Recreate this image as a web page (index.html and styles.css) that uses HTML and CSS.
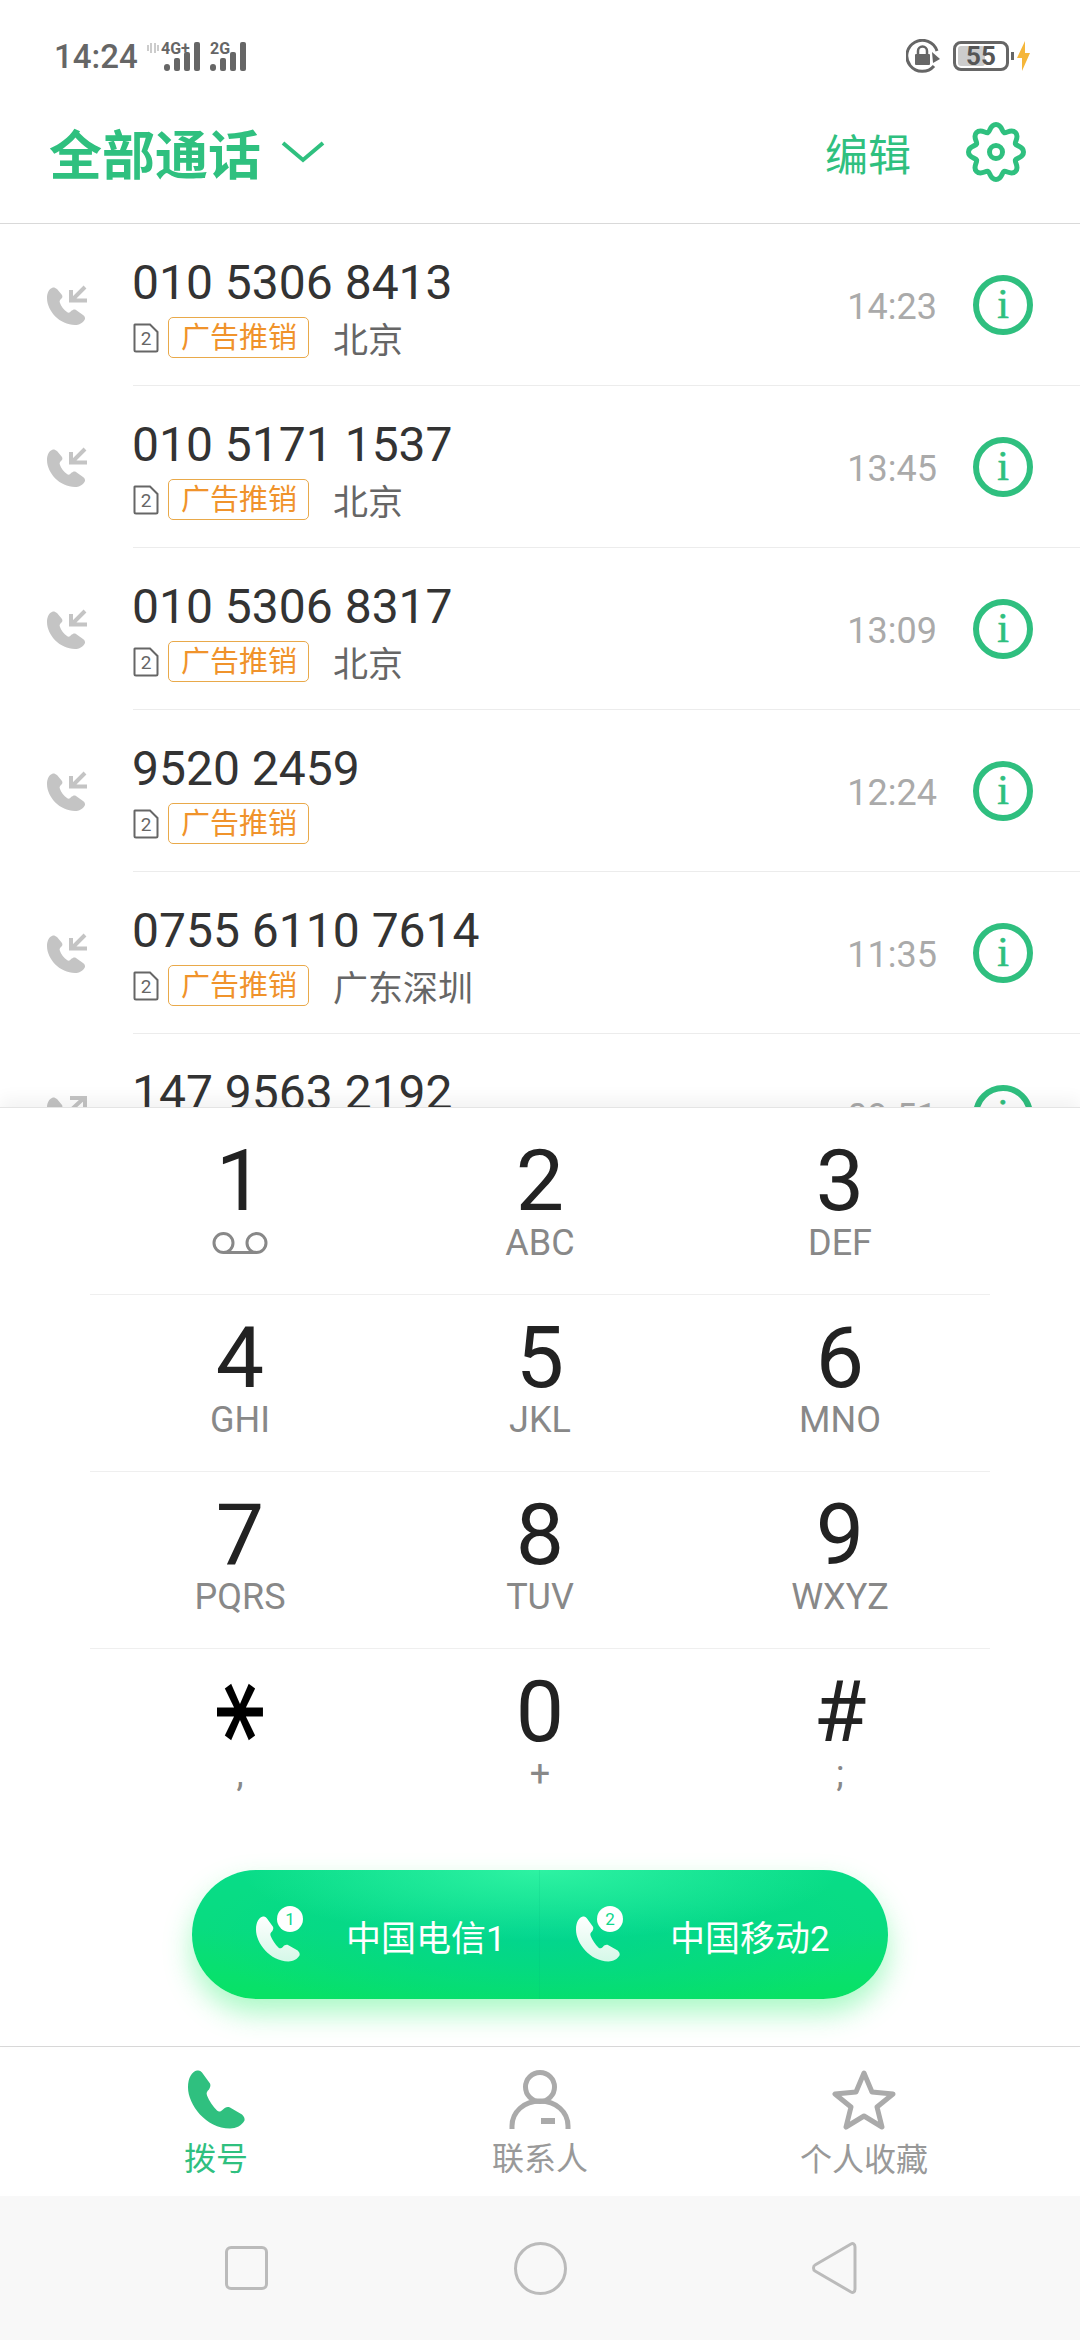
FILE: index.html
```html
<!DOCTYPE html>
<html lang="zh-CN">
  <head>
    <meta charset="UTF-8" />
    <meta name="viewport" content="width=device-width, initial-scale=1.0" />
    <title>拨号</title>
    <link rel="stylesheet" href="styles.css">
  </head>
  <body>
    <svg class="icon-defs" width="0" height="0">
      <defs>
        <linearGradient id="handset-fade" x1="0" y1="0" x2="0" y2="1">
          <stop offset="0" stop-color="#fff" />
          <stop offset="1" stop-color="#d5f8e8" />
        </linearGradient>
        <symbol id="handset" viewBox="0 0 57 58">
          <path d="M9 0C4 1 0 7 0 17C0 34 18 58 42 58C48 58 54 55 56.500 50C57 48 56 46 54 44L42 37C39 36 37 37 35 39C33 41 31 42 29 40C25 36 21 30 19 25C18 22 19 21 21 19C22 17 23 15 22 13L14 2C12 0 11 0 9 0Z" />
        </symbol>
        <symbol id="call-in" viewBox="0 0 40 40">
          <path d="M5 3C2 4 0 8 0 13C0 26 13 40 28 40C32 40 36 38 38 34C38 33 38 31 36 30L29 25C27 24 26 25 24 26C23 28 21 28 20 27C17 25 14 21 13 18C12 16 13 15 14 14C15 13 16 12 15 10L10 4C8 3 7 2 5 3Z" />
          <path class="call-arrow" d="M38 2L25 15M24 5V15.500H40" />
        </symbol>
        <symbol id="call-out" viewBox="0 0 40 40">
          <path d="M5 3C2 4 0 8 0 13C0 26 13 40 28 40C32 40 36 38 38 34C38 33 38 31 36 30L29 25C27 24 26 25 24 26C23 28 21 28 20 27C17 25 14 21 13 18C12 16 13 15 14 14C15 13 16 12 15 10L10 4C8 3 7 2 5 3Z" />
          <path class="call-arrow" d="M24 15L37 3M23 3H38V14" />
        </symbol>
        <symbol id="sim-2" viewBox="0 0 26 30">
          <path class="sim-outline" d="M2 1.500H17L24.500 9V27A1.500 1.500 0 0 1 23 28.500H3A1.500 1.500 0 0 1 1.500 27V2Z" />
          <text class="sim-number" x="13" y="22" text-anchor="middle">2</text>
        </symbol>
      </defs>
    </svg>

    <div class="status-bar">
      <span class="status-time">14:24</span>
      <svg class="status-signal" width="120" height="34" viewBox="0 0 120 34">
        <path class="status-hd" d="M2 6V12M5 4V14M9 4V14M12 6V12" />
        <text class="status-net" x="15" y="15">4G+</text>
        <rect x="18" y="25" width="6" height="7" rx="3" />
        <rect x="28" y="19" width="6" height="13" rx="2" />
        <rect x="38" y="13" width="6" height="19" rx="2" />
        <rect x="48" y="3" width="6" height="29" rx="2" />
        <text class="status-net" x="64" y="15">2G</text>
        <rect x="64" y="25" width="6" height="7" rx="3" />
        <rect x="74" y="19" width="6" height="13" rx="2" />
        <rect x="84" y="13" width="6" height="19" rx="2" />
        <rect x="94" y="3" width="6" height="29" rx="2" />
      </svg>
      <span class="status-spacer"></span>
      <svg class="status-rotate" width="34" height="34" viewBox="0 0 34 34">
        <path class="rotate-ring" d="M28 27A15.500 15.500 0 1 1 31 12" />
        <path class="rotate-tip" d="M26 13L34 20L27 24Z" />
        <rect class="rotate-lock" x="9" y="15" width="15" height="11" rx="1" />
        <path class="rotate-shackle" d="M12 15V12A4.500 4.500 0 0 1 21 12V15" />
      </svg>
      <div class="battery">
        <div class="battery-level"></div>
        <span class="battery-text">55</span>
      </div>
      <span class="battery-nub"></span>
      <svg class="battery-bolt" width="13" height="30" viewBox="0 0 13 30">
        <path d="M8 0L0 17H5L5 30L13 12H8Z" />
      </svg>
    </div>

    <header class="top-bar">
      <h1 class="top-title">全部通话</h1>
      <svg class="top-chevron" width="44" height="22" viewBox="0 0 44 22">
        <path d="M2 2L22 19L42 2" />
      </svg>
      <span class="top-spacer"></span>
      <span class="top-edit">编辑</span>
      <svg class="top-gear" width="60" height="60" viewBox="0 0 60 60">
        <path d="M57.500 30C57.500 36 50.360 35.730 49.400 38.040C48.440 40.350 53.690 45.210 49.450 49.450C45.210 53.690 40.350 48.440 38.040 49.400C35.730 50.360 36 57.500 30 57.500C24 57.500 24.270 50.360 21.960 49.400C19.650 48.440 14.790 53.690 10.550 49.450C6.310 45.210 11.560 40.350 10.600 38.040C9.640 35.730 2.500 36 2.500 30C2.500 24 9.640 24.270 10.600 21.960C11.560 19.650 6.310 14.790 10.550 10.550C14.790 6.310 19.650 11.560 21.960 10.600C24.270 9.640 24 2.500 30 2.500C36 2.500 35.730 9.640 38.040 10.600C40.350 11.560 45.210 6.310 49.450 10.550C53.690 14.790 48.440 19.650 49.400 21.960C50.360 24.270 57.500 24 57.500 30Z" />
        <circle cx="30" cy="30" r="6.500" />
      </svg>
    </header>

    <main class="call-list">
      <div class="call-row">
        <svg class="call-icon"><use href="#call-in" /></svg>
        <div class="call-main">
          <div class="call-info">
            <div class="call-number">010 5306 8413</div>
            <div class="call-meta">
              <svg class="call-sim"><use href="#sim-2" /></svg>
              <span class="call-tag">广告推销</span>
              <span class="call-place">北京</span>
            </div>
          </div>
          <span class="call-time">14:23</span>
          <span class="call-detail">i</span>
        </div>
      </div>
      <div class="call-row">
        <svg class="call-icon"><use href="#call-in" /></svg>
        <div class="call-main">
          <div class="call-info">
            <div class="call-number">010 5171 1537</div>
            <div class="call-meta">
              <svg class="call-sim"><use href="#sim-2" /></svg>
              <span class="call-tag">广告推销</span>
              <span class="call-place">北京</span>
            </div>
          </div>
          <span class="call-time">13:45</span>
          <span class="call-detail">i</span>
        </div>
      </div>
      <div class="call-row">
        <svg class="call-icon"><use href="#call-in" /></svg>
        <div class="call-main">
          <div class="call-info">
            <div class="call-number">010 5306 8317</div>
            <div class="call-meta">
              <svg class="call-sim"><use href="#sim-2" /></svg>
              <span class="call-tag">广告推销</span>
              <span class="call-place">北京</span>
            </div>
          </div>
          <span class="call-time">13:09</span>
          <span class="call-detail">i</span>
        </div>
      </div>
      <div class="call-row">
        <svg class="call-icon"><use href="#call-in" /></svg>
        <div class="call-main">
          <div class="call-info">
            <div class="call-number">9520 2459</div>
            <div class="call-meta">
              <svg class="call-sim"><use href="#sim-2" /></svg>
              <span class="call-tag">广告推销</span>
            </div>
          </div>
          <span class="call-time">12:24</span>
          <span class="call-detail">i</span>
        </div>
      </div>
      <div class="call-row">
        <svg class="call-icon"><use href="#call-in" /></svg>
        <div class="call-main">
          <div class="call-info">
            <div class="call-number">0755 6110 7614</div>
            <div class="call-meta">
              <svg class="call-sim"><use href="#sim-2" /></svg>
              <span class="call-tag">广告推销</span>
              <span class="call-place">广东深圳</span>
            </div>
          </div>
          <span class="call-time">11:35</span>
          <span class="call-detail">i</span>
        </div>
      </div>
      <div class="call-row">
        <svg class="call-icon"><use href="#call-out" /></svg>
        <div class="call-main">
          <div class="call-info">
            <div class="call-number">147 9563 2192</div>
          </div>
          <span class="call-time">09:51</span>
          <span class="call-detail">i</span>
        </div>
      </div>
    </main>

    <section class="dialer">
      <div class="keypad">
        <div class="key">
          <span class="key-digit">1</span>
          <svg class="key-voicemail" width="56" height="24" viewBox="0 0 56 24">
            <circle cx="11.500" cy="12" r="9.500" />
            <circle cx="44.500" cy="12" r="9.500" />
            <path d="M11.500 21.500H44.500" />
          </svg>
        </div>
        <div class="key"><span class="key-digit">2</span><span class="key-letters">ABC</span></div>
        <div class="key"><span class="key-digit">3</span><span class="key-letters">DEF</span></div>
        <div class="key"><span class="key-digit">4</span><span class="key-letters">GHI</span></div>
        <div class="key"><span class="key-digit">5</span><span class="key-letters">JKL</span></div>
        <div class="key"><span class="key-digit">6</span><span class="key-letters">MNO</span></div>
        <div class="key"><span class="key-digit">7</span><span class="key-letters">PQRS</span></div>
        <div class="key"><span class="key-digit">8</span><span class="key-letters">TUV</span></div>
        <div class="key"><span class="key-digit">9</span><span class="key-letters">WXYZ</span></div>
        <div class="key"><span class="key-digit key-star">*</span><span class="key-letters">,</span></div>
        <div class="key"><span class="key-digit">0</span><span class="key-letters">+</span></div>
        <div class="key"><span class="key-digit">#</span><span class="key-letters">;</span></div>
      </div>

      <div class="dial-pill">
        <div class="dial-sim dial-sim-first">
          <div class="dial-icon">
            <svg class="dial-handset" width="44" height="46"><use href="#handset" /></svg>
            <span class="dial-badge">1</span>
          </div>
          <span class="dial-name">中国电信1</span>
        </div>
        <div class="dial-sim dial-sim-second">
          <div class="dial-icon">
            <svg class="dial-handset" width="44" height="46"><use href="#handset" /></svg>
            <span class="dial-badge">2</span>
          </div>
          <span class="dial-name">中国移动2</span>
        </div>
      </div>
    </section>

    <nav class="tab-bar">
      <div class="tab tab-active">
        <svg class="tab-icon" width="57" height="59"><use href="#handset" /></svg>
        <span class="tab-label">拨号</span>
      </div>
      <div class="tab">
        <svg class="tab-icon tab-line" width="62" height="59" viewBox="0 0 62 59">
          <circle cx="31" cy="17" r="14.500" />
          <path d="M3 59V56C3 42 15 31 31 31C47 31 59 42 59 56V59" />
          <path class="tab-dash" d="M32 51H46" />
        </svg>
        <span class="tab-label">联系人</span>
      </div>
      <div class="tab">
        <svg class="tab-icon tab-line" width="64" height="60" viewBox="0 0 64 60">
          <path d="M32 3L40 22L61 24L45 37L50 57L32 46L14 57L19 37L3 24L24 22Z" />
        </svg>
        <span class="tab-label">个人收藏</span>
      </div>
    </nav>

    <div class="system-bar">
      <span class="system-square"></span>
      <span class="system-circle"></span>
      <svg class="system-back" width="46" height="54" viewBox="0 0 46 54">
        <path d="M40 3C42 2 44 3 44 6V48C44 51 42 52 40 51L4 30C2 29 2 25 4 24Z" />
      </svg>
    </div>
  </body>
</html>
```

FILE: styles.css
```css
* {
  box-sizing: border-box;
}

body {
  margin: 0;
  width: 1080px;
  height: 2340px;
  display: flex;
  flex-direction: column;
  overflow: hidden;
  background-color: #fff;
  font-family: Roboto, "Noto Sans CJK SC", sans-serif;
}

.icon-defs {
  position: absolute;
}

/* status bar */
.status-bar {
  height: 80px;
  padding: 32px 50px 0 54px;
  display: flex;
  align-items: center;
  flex-shrink: 0;
}

.status-time {
  font-size: 33px;
  font-weight: 500;
  color: #666;
}

.status-signal {
  margin-left: 8px;
  fill: #666;
}

.status-hd {
  fill: none;
  stroke: #ccc;
  stroke-width: 2;
}

.status-net {
  font-size: 16px;
  font-weight: 700;
}

.status-spacer,
.top-spacer {
  flex: 1;
}

.status-rotate {
  margin-right: 13px;
}

.rotate-ring {
  fill: none;
  stroke: #666;
  stroke-width: 3;
}

.rotate-tip,
.rotate-lock {
  fill: #666;
}

.rotate-shackle {
  fill: none;
  stroke: #666;
  stroke-width: 2.5;
}

.battery {
  width: 56px;
  height: 30px;
  border: 3px solid #666;
  border-radius: 8px;
  padding: 2px;
  position: relative;
}

.battery-level {
  width: 27px;
  height: 100%;
  background-color: #ccc;
  border-radius: 3px;
}

.battery-text {
  position: absolute;
  left: 0;
  right: 0;
  top: -3px;
  text-align: center;
  font-size: 26px;
  line-height: 30px;
  font-weight: 700;
  color: #555;
}

.battery-nub {
  width: 3px;
  height: 8px;
  margin-left: 2px;
  background-color: #666;
}

.battery-bolt {
  margin-left: 3px;
  fill: #f5b63a;
}

/* top bar */
.top-bar {
  height: 144px;
  padding: 0 54px 0 49px;
  display: flex;
  align-items: center;
  flex-shrink: 0;
  border-bottom: 1px solid #d9d9d9;
}

.top-title {
  margin: 0;
  font-size: 53px;
  font-weight: 700;
  color: #2fc07f;
}

.top-chevron {
  margin-left: 20px;
  fill: none;
  stroke: #2fc07f;
  stroke-width: 4;
}

.top-edit {
  font-size: 43px;
  color: #2fc07f;
}

.top-gear {
  margin-left: 55px;
  fill: none;
  stroke: #2fc07f;
  stroke-width: 5;
  stroke-linejoin: round;
}

/* call log */
.call-list {
  height: 883px;
  flex-shrink: 0;
  overflow: hidden;
}

.call-row {
  height: 162px;
  display: flex;
  align-items: center;
}

.call-icon {
  width: 40px;
  height: 40px;
  margin: 0 46px 0 47px;
  flex-shrink: 0;
  fill: #c4c4c4;
}

.call-arrow {
  fill: none;
  stroke: #c4c4c4;
  stroke-width: 4;
}

.call-main {
  flex: 1;
  height: 100%;
  padding-right: 47px;
  display: flex;
  align-items: center;
  border-bottom: 1px solid #ececec;
}

.call-info {
  flex: 1;
  align-self: flex-start;
  padding-top: 30px;
}

.call-number {
  font-size: 48px;
  line-height: 58px;
  color: #333;
  margin-left: -1px;
}

.call-meta {
  margin-top: 5px;
  height: 41px;
  display: flex;
  align-items: center;
}

.call-sim {
  width: 26px;
  height: 30px;
  margin-right: 9px;
}

.sim-outline {
  fill: none;
  stroke: #666;
  stroke-width: 2;
}

.sim-number {
  font-size: 19px;
  fill: #666;
}

.call-tag {
  height: 41px;
  padding: 0 11px 0 12px;
  border: 1px solid #e9a94a;
  border-radius: 5px;
  font-size: 29px;
  line-height: 41px;
  color: #f0932b;
}

.call-place {
  margin-left: 24px;
  font-size: 35px;
  color: #666;
}

.call-time {
  margin-top: 5px;
  margin-right: -1px;
  font-size: 36px;
  color: #aaa;
}

.call-detail {
  width: 60px;
  height: 60px;
  margin-left: 37px;
  border: 6px solid #2fbf7f;
  border-radius: 50%;
  text-align: center;
  font-family: "Liberation Serif", serif;
  font-size: 42px;
  -webkit-text-stroke: 0.6px #2fbf7f;
  line-height: 47px;
  color: #2fbf7f;
}

/* dial pad */
.dialer {
  height: 939px;
  flex-shrink: 0;
  position: relative;
  background-color: #fff;
  border-top: 1px solid #e4e4e4;
  box-shadow: 0 -8px 16px rgba(0, 0, 0, 0.05);
}

.keypad {
  margin: 0 90px;
  padding-top: 10px;
  display: grid;
  grid-template-columns: repeat(3, 300px);
  grid-auto-rows: 177px;
}

.key {
  padding-top: 21px;
  display: flex;
  flex-direction: column;
  align-items: center;
  border-bottom: 1px solid #efefef;
}

.key:nth-child(n + 10) {
  border-bottom: none;
}

.key-digit {
  height: 84px;
  font-size: 86px;
  line-height: 84px;
  color: #222;
}

.key-star {
  font-family: "DejaVu Sans", sans-serif;
  font-size: 120px;
  -webkit-text-stroke: 2.5px #000;
  color: #000;
  transform: translate(-17px, 0) rotate(90deg) scale(1, 0.8);
}

.key-letters {
  height: 40px;
  font-size: 36px;
  line-height: 40px;
  color: #888;
}

.key-voicemail {
  margin-top: 8px;
  fill: none;
  stroke: #888;
  stroke-width: 3;
}

.dial-pill {
  width: 696px;
  height: 129px;
  margin: 44px auto 0;
  display: flex;
  border-radius: 65px;
  background:
    radial-gradient(ellipse 300px 70px at 50% 0, rgba(50, 245, 165, 0.9), rgba(50, 245, 165, 0)),
    radial-gradient(ellipse 340px 90px at 50% 50%, rgba(0, 210, 150, 0.7), rgba(0, 210, 150, 0)),
    linear-gradient(180deg, #08dc88 0%, #08dc80 45%, #08e264 100%);
  box-shadow: 0 14px 28px rgba(40, 240, 110, 0.4);
}

.dial-sim {
  width: 348px;
  display: flex;
  align-items: center;
  color: #fff;
}

.dial-sim-first {
  padding-left: 64px;
  border-right: 1px solid rgba(0, 180, 120, 0.15);
}

.dial-sim-second {
  padding-left: 36px;
}

.dial-icon {
  width: 44px;
  height: 46px;
  margin-top: 8px;
  position: relative;
}

.dial-handset {
  display: block;
  fill: url(#handset-fade);
}

.dial-badge {
  position: absolute;
  left: 21px;
  top: -10px;
  width: 26px;
  height: 26px;
  border-radius: 50%;
  background-color: #fff;
  text-align: center;
  font-size: 17px;
  line-height: 26px;
  color: #10d68c;
}

.dial-name {
  margin: 2px 0 0 46px;
  font-size: 35px;
  color: #fff;
}

.dial-sim-second .dial-name {
  margin-left: 50px;
}

/* bottom tabs */
.tab-bar {
  height: 150px;
  padding: 23px 54px 0;
  flex-shrink: 0;
  display: grid;
  grid-template-columns: repeat(3, 324px);
  border-top: 1px solid #d9d9d9;
}

.tab {
  display: flex;
  flex-direction: column;
  align-items: center;
}

.tab-icon {
  fill: #aaa;
}

.tab-active .tab-icon {
  fill: #2fc07f;
}

.tab-line {
  fill: none;
  stroke: #aaa;
  stroke-width: 5;
  stroke-linejoin: round;
}

.tab-dash {
  stroke-width: 6;
}

.tab-label {
  margin-top: 11px;
  font-size: 32px;
  line-height: 38px;
  color: #999;
}

.tab-active .tab-label {
  color: #2fc07f;
}

/* android nav */
.system-bar {
  flex: 1;
  display: grid;
  grid-template-columns: repeat(3, 294px);
  justify-content: center;
  justify-items: center;
  align-items: center;
  background-color: #f8f8f8;
}

.system-square {
  width: 43px;
  height: 44px;
  border: 3px solid #bbb;
  border-radius: 6px;
}

.system-circle {
  width: 53px;
  height: 53px;
  border: 3px solid #bbb;
  border-radius: 50%;
}

.system-back {
  fill: none;
  stroke: #bbb;
  stroke-width: 3;
}
```
